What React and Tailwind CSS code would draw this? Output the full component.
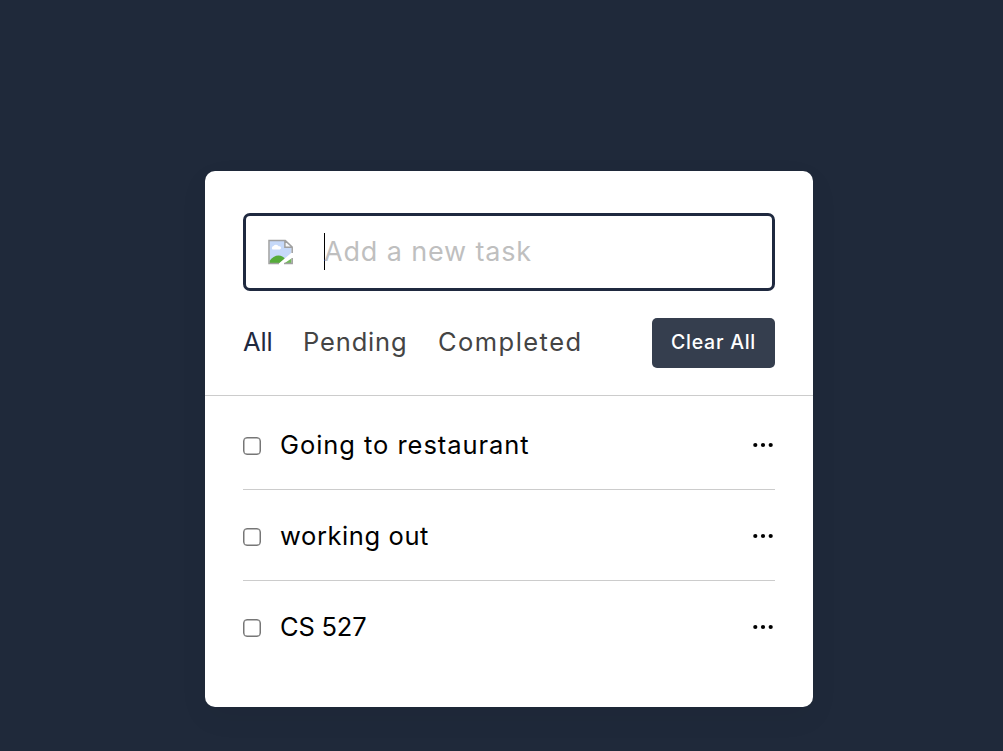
import React from "react";

const tasks = [
  { name: "Going to restaurant", tracking: "tracking-[0.95px]" },
  { name: "working out", tracking: "tracking-[0.6px]" },
  { name: "CS 527", tracking: "tracking-[-0.2px]" },
];

function BrokenImage() {
  return (
    <svg width="26" height="26" viewBox="0 0 26 26" aria-hidden="true">
      <path d="M1.5 2H17.5L23.5 8V14L13.5 24.5H1.5Z" fill="#c6d9f9" />
      <path d="M4.5 10.5a2 2 0 0 1 1-3.4a3 3 0 0 1 5.2.2a1.7 1.7 0 0 1 1.2 3.2Z" fill="#fff" />
      <path d="M1.5 24.5V22C3.5 18.5 7.5 16.5 10.5 16.5C13.5 16.5 15.5 18 17 20L11.5 24.5Z" fill="#55ab39" />
      <path d="M16 24.5L23.5 19.5V24.5Z" fill="#72b95b" />
      <path d="M25 12.5V17L13.5 26H9Z" fill="#fff" />
      <path d="M17 2V8.2H23.5Z" fill="#f8f8f8" />
      <path d="M11 24.6H1V1.6H17.3L24.2 8V14M16.9 2V8.3H24M24.2 19V24.6H16" fill="none" stroke="#a0a0a0" strokeWidth="1.5" />
    </svg>
  );
}

function Dots() {
  return (
    <svg width="20" height="6" viewBox="0 0 20 6" aria-label="Task options">
      <circle cx="2.3" cy="3" r="2.1" />
      <circle cx="10" cy="3" r="2.1" />
      <circle cx="17.7" cy="3" r="2.1" />
    </svg>
  );
}

export default function App() {
  return (
    <div className="h-[751px] overflow-hidden bg-[#1f293a] pt-[171px] pl-[205px] font-['Inter','Liberation_Sans',sans-serif]">
      <main className="h-[536px] w-[608px] rounded-[10px] bg-white pt-[42px] shadow-[0_10px_30px_rgba(0,0,0,0.05)]">
        <div className="mx-[38px] flex h-[78px] items-center rounded-[7px] border-3 border-[#1f293f] pl-[22px]">
          <BrokenImage />
          <span className="mb-[2px] ml-[30px] h-[37px] w-px bg-black" />
          <span className="-ml-px mt-px text-[27px] tracking-[0.85px] text-[#bfbfbf]">Add a new task</span>
        </div>
        <div className="mt-[27px] flex h-[78px] items-start justify-between border-b border-[#ccc] px-[38px]">
          <nav className="flex h-[50px] items-center pb-[2px] text-[25.5px] text-[#444]">
            <span className="w-[60px] tracking-[-0.1px] text-[#1f293f]">All</span>
            <span className="w-[135px] tracking-[0.85px]">Pending</span>
            <span className="tracking-[1.45px]">Completed</span>
          </nav>
          <button className="flex h-[50px] w-[123px] items-center justify-center rounded-[5px] bg-[#353e4e] text-[19.5px] font-medium tracking-[0.75px] text-white">
            Clear All
          </button>
        </div>
        <ul className="px-[38px] pt-[3px]">
          {tasks.map((task) => (
            <li key={task.name} className="flex h-[91px] items-center border-b border-[#ccc] pt-[3px] last:border-transparent">
              <span className="h-[18px] w-[18px] rounded-[4px] border border-[#767676] shadow-[inset_0_0_0_0.5px_#767676]" />
              <span className={"ml-[19px] grow text-[25.5px] text-black " + task.tracking}>{task.name}</span>
              <span className="mr-[2px] mb-px"><Dots /></span>
            </li>
          ))}
        </ul>
      </main>
    </div>
  );
}
